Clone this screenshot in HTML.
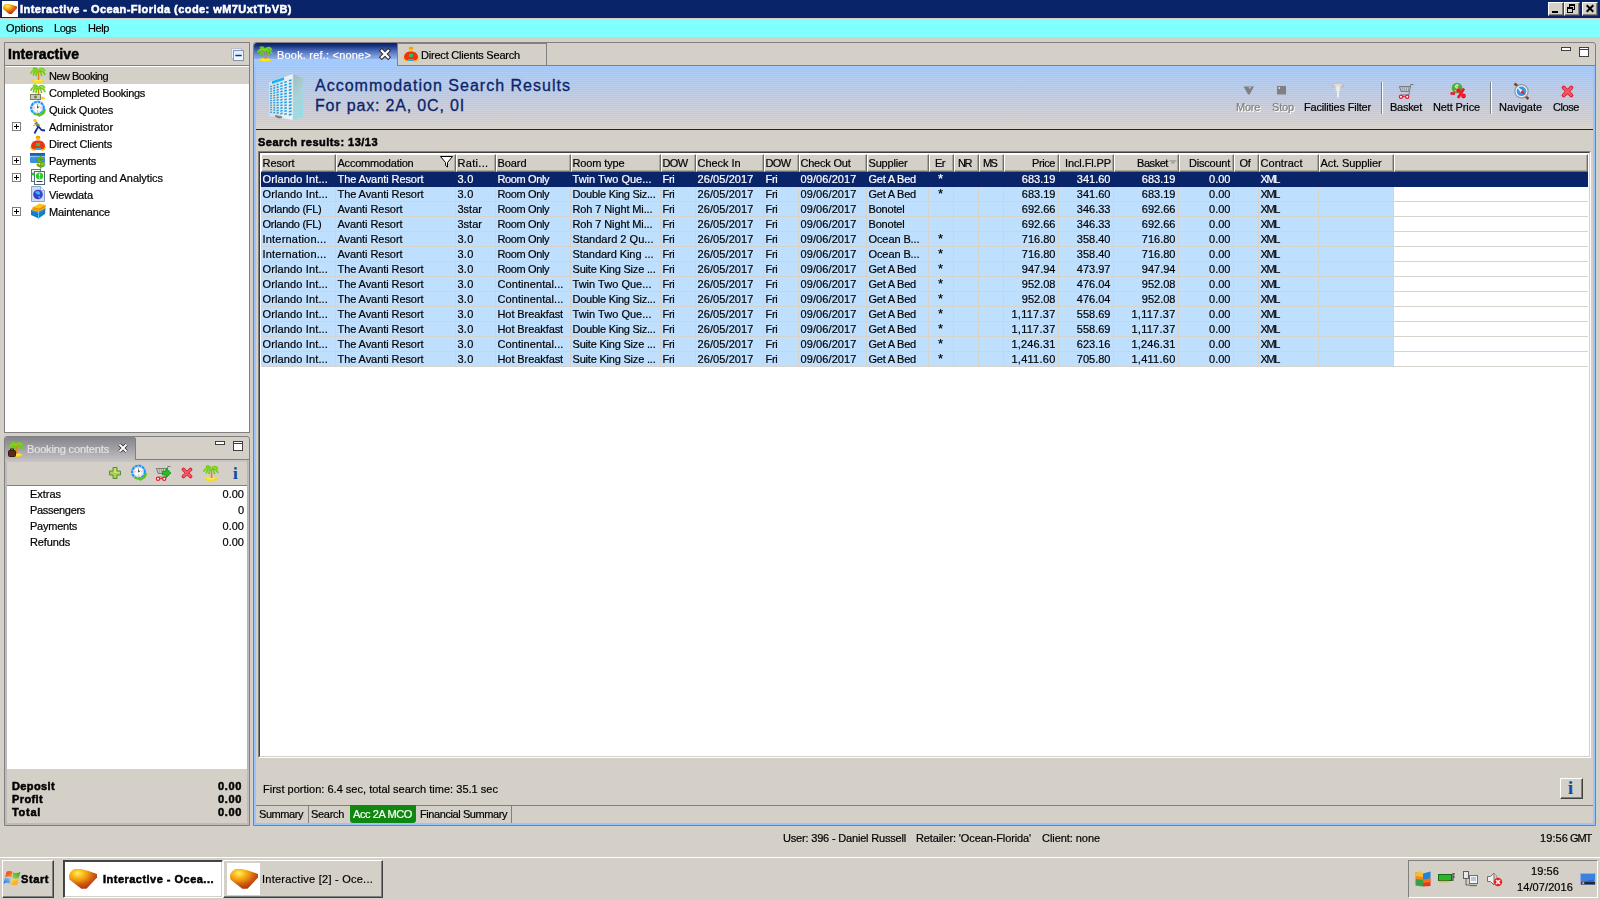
<!DOCTYPE html>
<html><head><meta charset="utf-8"><title>Interactive - Ocean-Florida</title>
<style>
html,body{margin:0;padding:0}
body{width:1600px;height:900px;overflow:hidden;background:#D4D0C8;position:relative;font-family:"Liberation Sans",sans-serif;font-size:11px;color:#000}
.b{position:absolute;box-sizing:border-box}
.t{position:absolute;white-space:nowrap;line-height:13px;height:13px;filter:grayscale(1);-webkit-text-stroke:0.2px}
.c{filter:none}
.bd{-webkit-text-stroke:0.5px}
svg{position:absolute;overflow:visible}
.hc{border:1px solid;border-color:#fff #716F64 #716F64 #fff;box-shadow:inset -1px -1px 0 #ACA899}
</style></head>
<body>
<div class="b" style="left:0px;top:0px;width:1600px;height:18px;background:#0A246A"></div>
<div class="b" style="left:2px;top:1px;width:16px;height:16px;background:#fff"></div>
<svg style="left:3px;top:4px" width="14" height="10" viewBox="0 0 28 20"><defs><radialGradient id="gg3_4" cx="0.32" cy="0.22" r="0.85"><stop offset="0" stop-color="#FFF27A"/><stop offset="0.18" stop-color="#FFC824"/><stop offset="0.42" stop-color="#F0960F"/><stop offset="0.66" stop-color="#CE5A16"/><stop offset="0.9" stop-color="#B43C0A"/></radialGradient></defs><path d="M0 7.500 C0 4 3 0.500 6 0 L12 0 L19.500 2 L28 5 L28 8.500 L17.500 19.800 L12.300 19.800 L3 12.500 L0.500 10.500 Z" fill="url(#gg3_4)"/></svg>
<div class="t bd" style="left:20px;top:3px;font-weight:bold;color:#fff;letter-spacing:0.438px">Interactive - Ocean-Florida (code: wM7UxtTbVB)</div>
<div class="b" style="left:1548px;top:2px;width:16px;height:14px;background:#D4D0C8;border:1px solid;border-color:#fff #404040 #404040 #fff;box-shadow:inset -1px -1px 0 #808080"></div>
<div class="b" style="left:1552px;top:11px;width:6px;height:2px;background:#000"></div>
<div class="b" style="left:1564px;top:2px;width:16px;height:14px;background:#D4D0C8;border:1px solid;border-color:#fff #404040 #404040 #fff;box-shadow:inset -1px -1px 0 #808080"></div>
<svg style="left:1566px;top:3px" width="12" height="11" viewBox="0 0 12 11"><g shape-rendering="crispEdges" fill="#000"><rect x="3" y="1" width="6" height="2"/><rect x="8" y="1" width="1" height="6"/><rect x="3" y="1" width="1" height="3"/><rect x="7" y="6" width="2" height="1"/><rect x="1" y="4" width="6" height="2"/><rect x="1" y="4" width="1" height="6"/><rect x="6" y="4" width="1" height="6"/><rect x="1" y="9" width="6" height="1"/></g></svg>
<div class="b" style="left:1582px;top:2px;width:16px;height:14px;background:#D4D0C8;border:1px solid;border-color:#fff #404040 #404040 #fff;box-shadow:inset -1px -1px 0 #808080"></div>
<svg style="left:1585px;top:4px" width="10" height="9" viewBox="0 0 10 9"><path d="M1.700 1.200 L8.300 7.800 M8.300 1.200 L1.700 7.800" stroke="#000" stroke-width="2"/></svg>
<div class="b" style="left:0px;top:19px;width:1600px;height:18px;background:#80FFFF"></div>
<div class="t" style="left:6px;top:22px;letter-spacing:-0.130px">Options</div>
<div class="t" style="left:54px;top:22px;letter-spacing:-0.464px">Logs</div>
<div class="t" style="left:88px;top:22px;letter-spacing:-0.406px">Help</div>
<div class="b" style="left:4px;top:42px;width:246px;height:391px;border:1px solid #808080"></div>
<div class="b" style="left:5px;top:65px;width:244px;height:1px;background:#808080"></div>
<div class="t bd" style="left:8px;top:45px;font-size:14px;font-weight:bold;line-height:18px;height:18px;letter-spacing:0.088px">Interactive</div>
<svg style="left:231px;top:48px" width="14" height="14" viewBox="0 0 14 14"><rect x="0.500" y="0.500" width="10" height="10" fill="#E8F2FC" stroke="#B4C0DA" stroke-width="1"/><rect x="2.500" y="2.500" width="10" height="10" fill="#F0F8FF" stroke="#8C94AC" stroke-width="1"/><rect x="3" y="3" width="9" height="3" fill="#DCF0FF"/><path d="M4.300 7.500 h6.400" stroke="#003A7C" stroke-width="1.500"/></svg>
<div class="b" style="left:5px;top:66px;width:244px;height:366px;background:#fff"></div>
<div class="b" style="left:5px;top:67px;width:244px;height:17px;background:#D4D0C8"></div>
<div class="t" style="left:49px;top:70px;letter-spacing:-0.529px">New Booking</div>
<svg style="left:30px;top:67px" width="16" height="16" viewBox="0 0 16 16"><ellipse cx="8" cy="14" rx="6.5" ry="1.8" fill="#FFD800"/><ellipse cx="8" cy="13.5" rx="4.5" ry="1" fill="#FFEA40"/><path d="M8.2 4.5 C9.2 7 8.2 10 8.6 13" stroke="#E0861A" stroke-width="1.6" fill="none"/><path d="M8 4 C5 1.5 2.5 3 1 6 M8 4 C6 3 3.5 5 3.5 8 M8 4 C7 1 4.5 0.5 3.5 1.5 M8 4 C10 0.5 13 1 14.5 3.5 M8 4 C11 2.5 14 5 14.8 7.5 M8 4 C10 4 11.5 6 11.5 8.5 M8 4 C7 5 5.8 6.5 6 8.5" stroke="#70CC14" stroke-width="1.7" fill="none" stroke-linecap="round"/><path d="M8 4 C5.5 2.5 3 3.5 2 5.5 M8 4 C10.5 1.5 12.5 2 14 4" stroke="#99DD33" stroke-width="0.9" fill="none"/></svg>
<div class="t" style="left:49px;top:87px;letter-spacing:-0.306px">Completed Bookings</div>
<svg style="left:30px;top:84px" width="16" height="16" viewBox="0 0 16 16"><ellipse cx="11" cy="14.2" rx="4" ry="1.4" fill="#FFD21A"/><path d="M8.2 4.5 C9.2 7 8.2 10 8.6 13" stroke="#E0861A" stroke-width="1.6" fill="none"/><path d="M8 4 C5 1.5 2.5 3 1 6 M8 4 C6 3 3.5 5 3.5 8 M8 4 C7 1 4.5 0.5 3.5 1.5 M8 4 C10 0.5 13 1 14.5 3.5 M8 4 C11 2.5 14 5 14.8 7.5 M8 4 C10 4 11.5 6 11.5 8.5 M8 4 C7 5 5.8 6.5 6 8.5" stroke="#70CC14" stroke-width="1.7" fill="none" stroke-linecap="round"/><path d="M8 4 C5.5 2.5 3 3.5 2 5.5 M8 4 C10.5 1.5 12.5 2 14 4" stroke="#99DD33" stroke-width="0.9" fill="none"/><rect x="0.5" y="10.5" width="10" height="5" fill="#C9CDB0" stroke="#7A8060" stroke-width="1"/><circle cx="5.5" cy="13" r="1.4" fill="#70785A"/></svg>
<div class="t" style="left:49px;top:104px;letter-spacing:-0.220px">Quick Quotes</div>
<svg style="left:30px;top:101px" width="16" height="16" viewBox="0 0 16 16"><circle cx="7.500" cy="7" r="6.300" fill="#fff" stroke="#1E90FF" stroke-width="2.200" stroke-dasharray="3 0.600"/><path d="M2 9.500 C3.500 13 7 13.500 9 13 C11.500 12.500 13 11 13.500 8.500 L16 8 L15.300 11.500 C13.500 14.500 11 14.500 9.500 16 L7.300 14.600 C4.500 14.500 2.200 12.500 2 9.500Z" fill="#5CC41E"/><circle cx="7.500" cy="6.800" r="4.700" fill="#FCFCFC" stroke="#C0C8D0" stroke-width="0.800"/><path d="M7.500 3 v1 M7.500 9.600 v1 M3.700 6.800 h1 M10.300 6.800 h1" stroke="#888" stroke-width="0.800"/><path d="M7.500 4.500 V7 L9.300 5.700" stroke="#444" stroke-width="0.900" fill="none"/></svg>
<div class="t" style="left:49px;top:121px;letter-spacing:-0.062px">Administrator</div>
<svg style="left:30px;top:118px" width="16" height="16" viewBox="0 0 16 16"><circle cx="5" cy="2.5" r="1.8" fill="#FFC733"/><path d="M5.5 4.5 L8.5 8.5" stroke="#5577AA" stroke-width="3"/><path d="M6.5 6 L3 8 M7 5.5 L10 7" stroke="#FFB020" stroke-width="1.3"/><path d="M8.5 8.5 L6 12.5 L4.5 15.5 M8.5 8.5 L11.5 12 L15 12.5" stroke="#1A2E9A" stroke-width="1.8" fill="none" stroke-linejoin="round"/><path d="M7 6 L9 8" stroke="#33AA33" stroke-width="1.5"/></svg>
<svg style="left:12px;top:122px" width="9" height="9" viewBox="0 0 9 9"><rect x="0.5" y="0.5" width="8" height="8" fill="#fff" stroke="#808080" stroke-width="1"/><path d="M2 4.500 H7 M4.500 2 V7" stroke="#000" stroke-width="1"/></svg>
<div class="t" style="left:49px;top:138px;letter-spacing:-0.172px">Direct Clients</div>
<svg style="left:30px;top:135px" width="16" height="16" viewBox="0 0 16 16"><circle cx="8" cy="2.8" r="2.4" fill="#FFC21A"/><path d="M6 2 h4" stroke="#E08000" stroke-width="1"/><path d="M1 13 C0.5 8 3 5.5 8 5.5 C13 5.5 15.5 8 15 13 C13 15.5 3 15.5 1 13Z" fill="#EE3311"/><path d="M1 12 C0.5 13.5 2.5 15.5 4.5 15 M15 12 C15.5 13.5 13.5 15.5 11.5 15" stroke="#FFC21A" stroke-width="1.6" fill="none"/><rect x="6" y="8" width="4" height="3" fill="#33BB55"/><rect x="5" y="13" width="6" height="2" fill="#33AACC"/></svg>
<div class="t" style="left:49px;top:155px;letter-spacing:-0.239px">Payments</div>
<svg style="left:30px;top:152px" width="16" height="16" viewBox="0 0 16 16"><rect x="0" y="1" width="15" height="10" rx="1" fill="#3B8FE0"/><rect x="0" y="1" width="15" height="2.5" fill="#1A5FB0"/><rect x="0" y="4" width="15" height="1.2" fill="#7FC0FF"/><text x="6.5" y="15" font-family="Liberation Sans" font-weight="bold" font-size="15" fill="#7BC618" stroke="#4C8A00" stroke-width="0.5">$</text></svg>
<svg style="left:12px;top:156px" width="9" height="9" viewBox="0 0 9 9"><rect x="0.5" y="0.5" width="8" height="8" fill="#fff" stroke="#808080" stroke-width="1"/><path d="M2 4.500 H7 M4.500 2 V7" stroke="#000" stroke-width="1"/></svg>
<div class="t" style="left:49px;top:172px;letter-spacing:-0.069px">Reporting and Analytics</div>
<svg style="left:30px;top:169px" width="16" height="16" viewBox="0 0 16 16"><rect x="1.5" y="0.5" width="9" height="12" fill="#F4F6F8" stroke="#607080" stroke-width="1"/><rect x="4.500" y="2.5" width="10" height="13" fill="#fff" stroke="#506878" stroke-width="1"/><circle cx="9.5" cy="7" r="3.6" fill="#22CC22"/><path d="M9.5 4.500 v3" stroke="#fff" stroke-width="1.3"/><circle cx="9.5" cy="9" r="0.8" fill="#fff"/><path d="M6.5 12.5 h6" stroke="#663322" stroke-width="1"/><circle cx="3.3" cy="5" r="1.5" fill="#33BB33"/></svg>
<svg style="left:12px;top:173px" width="9" height="9" viewBox="0 0 9 9"><rect x="0.5" y="0.5" width="8" height="8" fill="#fff" stroke="#808080" stroke-width="1"/><path d="M2 4.500 H7 M4.500 2 V7" stroke="#000" stroke-width="1"/></svg>
<div class="t" style="left:49px;top:189px;letter-spacing:-0.132px">Viewdata</div>
<svg style="left:30px;top:186px" width="16" height="16" viewBox="0 0 16 16"><path d="M1.5 0.5 H10.5 L14.5 4.500 V15.5 H1.5Z" fill="#CFDDF0" stroke="#8CA4C8" stroke-width="1"/><path d="M10.5 0.5 V4.500 H14.5" fill="#F4F8FC" stroke="#8CA4C8" stroke-width="0.8"/><circle cx="8" cy="8.5" r="4.800" fill="#3A3FD0"/><path d="M5.5 6 C7 4.500 9 5 10 6.5 C11 8 9.5 9 8 8.5 C6.5 8 5.5 7.5 5.5 6Z M8.5 10 C10 10 11 11 10 12 C9 12.500 8 11.500 8.500 10Z" fill="#33BBEE"/></svg>
<div class="t" style="left:49px;top:206px;letter-spacing:-0.181px">Maintenance</div>
<svg style="left:30px;top:203px" width="16" height="16" viewBox="0 0 16 16"><path d="M1 7 L9 3 L15.500 5 L15 11 L8.500 15.500 L1 12Z" fill="#1E8FE0"/><path d="M1 9 L8.500 12 L15.300 7.500 M1 11 L8.500 14 L15.100 9.500" stroke="#0A5FA8" stroke-width="0.8" fill="none"/><path d="M2.500 4.500 L9.500 0.500 L15.500 2 L15.500 5 L8.500 9 L1.500 7Z" fill="#FFC21A"/><path d="M2.500 6 L8.500 7.500 L15.500 3.500 M3 4.700 L9 6.200 L15.500 2.500" stroke="#E07800" stroke-width="0.8" fill="none"/><path d="M8.500 9 V15.500" stroke="#55C8F8" stroke-width="1"/></svg>
<svg style="left:12px;top:207px" width="9" height="9" viewBox="0 0 9 9"><rect x="0.5" y="0.5" width="8" height="8" fill="#fff" stroke="#808080" stroke-width="1"/><path d="M2 4.500 H7 M4.500 2 V7" stroke="#000" stroke-width="1"/></svg>
<div class="b" style="left:4px;top:436px;width:246px;height:390px;border:1px solid #808080;border-radius:3px 3px 0 0"></div>
<div class="b" style="left:5px;top:460px;width:244px;height:365px;border:2px solid #BEBABA;border-top:none"></div>
<div class="b" style="left:5px;top:437px;width:130px;height:25px;background:linear-gradient(#84848C 0%,#A4A2A8 50%,#C8C4C6 100%);border-radius:2px 0 0 0"></div>
<div class="b" style="left:135px;top:460px;width:114px;height:2px;background:#C8C4C6"></div>
<div class="b" style="left:135px;top:438px;width:1px;height:22px;background:#808080"></div>
<div class="b" style="left:135px;top:459px;width:114px;height:1px;background:#808080"></div>
<svg style="left:8px;top:441px" width="16" height="16" viewBox="0 0 16 16"><ellipse cx="8" cy="14" rx="6.5" ry="1.8" fill="#FFD800"/><ellipse cx="8" cy="13.5" rx="4.5" ry="1" fill="#FFEA40"/><path d="M8.2 4.5 C9.2 7 8.2 10 8.6 13" stroke="#E0861A" stroke-width="1.6" fill="none"/><path d="M8 4 C5 1.5 2.5 3 1 6 M8 4 C6 3 3.5 5 3.5 8 M8 4 C7 1 4.5 0.5 3.5 1.5 M8 4 C10 0.5 13 1 14.5 3.5 M8 4 C11 2.5 14 5 14.8 7.5 M8 4 C10 4 11.5 6 11.5 8.5 M8 4 C7 5 5.8 6.5 6 8.5" stroke="#70CC14" stroke-width="1.7" fill="none" stroke-linecap="round"/><path d="M8 4 C5.5 2.5 3 3.5 2 5.5 M8 4 C10.5 1.5 12.5 2 14 4" stroke="#99DD33" stroke-width="0.9" fill="none"/><rect x="0.5" y="9.5" width="7" height="6" rx="1" fill="#5A2E12" stroke="#3A1A08" stroke-width="1"/><rect x="2.5" y="8" width="3" height="1.5" fill="none" stroke="#3A1A08" stroke-width="1"/></svg>
<div class="t" style="left:27px;top:443px;color:#E4E2DA;letter-spacing:-0.150px">Booking contents</div>
<svg style="left:118px;top:443px" width="10" height="10" viewBox="0 0 10 10"><path d="M1.500 1.500 L8.500 8.500 M8.500 1.500 L1.500 8.500" stroke="#222" stroke-width="3.400"/><path d="M1.500 1.500 L8.500 8.500 M8.500 1.500 L1.500 8.500" stroke="#fff" stroke-width="2"/></svg>
<div class="b" style="left:215px;top:441px;width:10px;height:4px;background:#fff;border:1px solid #404040"></div>
<div class="b" style="left:233px;top:441px;width:10px;height:10px;background:#fff;border:1px solid #404040"></div>
<div class="b" style="left:233px;top:443px;width:10px;height:1px;background:#404040"></div>
<div class="b" style="left:7px;top:485px;width:241px;height:1px;background:#808080"></div>
<svg style="left:109px;top:467px" width="12" height="12" viewBox="0 0 12 12"><path d="M4 0.500 H8 V4 H11.500 V8 H8 V11.500 H4 V8 H0.500 V4 H4Z" fill="#B4CE48" stroke="#4C9240" stroke-width="1"/><path d="M5 1.500 H7 V5 H10.500 V6 H5Z" fill="#D0E070"/></svg>
<svg style="left:131px;top:465px" width="16" height="16" viewBox="0 0 16 16"><circle cx="7.500" cy="7" r="6.300" fill="#fff" stroke="#1E90FF" stroke-width="2.200" stroke-dasharray="3 0.600"/><path d="M2 9.500 C3.500 13 7 13.500 9 13 C11.500 12.500 13 11 13.500 8.500 L16 8 L15.300 11.500 C13.500 14.500 11 14.500 9.500 16 L7.300 14.600 C4.500 14.500 2.200 12.500 2 9.500Z" fill="#5CC41E"/><circle cx="7.500" cy="6.800" r="4.700" fill="#FCFCFC" stroke="#C0C8D0" stroke-width="0.800"/><path d="M7.500 3 v1 M7.500 9.600 v1 M3.700 6.800 h1 M10.300 6.800 h1" stroke="#888" stroke-width="0.800"/><path d="M7.500 4.500 V7 L9.300 5.700" stroke="#444" stroke-width="0.900" fill="none"/></svg>
<svg style="left:155px;top:465px" width="16" height="16" viewBox="0 0 16 16"><path d="M1 3.500 H12.500 M1.500 3.500 L3 8.500 H11.500 L12.800 1.500 H15.500" stroke="#7C7C7C" stroke-width="1" fill="none"/><path d="M4.200 3.500 V8.500 M6.300 3.500 V8.500 M8.400 3.500 V8.500 M10.500 3.500 V8.500" stroke="#8C8C8C" stroke-width="0.800"/><path d="M11.500 8.500 L10.800 12 H3.500" stroke="#7C7C7C" stroke-width="1" fill="none"/><circle cx="3" cy="13.700" r="1.600" fill="#fff" stroke="#E8182A" stroke-width="1.200"/><circle cx="9.200" cy="13.700" r="1.600" fill="#fff" stroke="#E8182A" stroke-width="1.200"/><path d="M4.800 13.700 H7.400" stroke="#E8182A" stroke-width="1"/><path d="M7.500 6 H11.500 V3.500 L16 8 L11.500 12.500 V10 H7.500Z" fill="#22C022" stroke="#0E8A0E" stroke-width="0.700"/></svg>
<svg style="left:181px;top:467px" width="12" height="12" viewBox="0 0 16 16"><path d="M3.300 3.300 L12.700 12.700 M12.700 3.300 L3.300 12.700" stroke="#D8283C" stroke-width="5" stroke-linecap="round"/><path d="M3.600 3.600 L12.400 12.400 M12.400 3.600 L3.600 12.400" stroke="#EE5A66" stroke-width="2.600" stroke-linecap="round"/></svg>
<svg style="left:203px;top:465px" width="16" height="16" viewBox="0 0 16 16"><ellipse cx="8" cy="14" rx="6.5" ry="1.8" fill="#FFD800"/><ellipse cx="8" cy="13.5" rx="4.5" ry="1" fill="#FFEA40"/><path d="M8.2 4.5 C9.2 7 8.2 10 8.6 13" stroke="#E0861A" stroke-width="1.6" fill="none"/><path d="M8 4 C5 1.5 2.5 3 1 6 M8 4 C6 3 3.5 5 3.5 8 M8 4 C7 1 4.5 0.5 3.5 1.5 M8 4 C10 0.5 13 1 14.5 3.5 M8 4 C11 2.5 14 5 14.8 7.5 M8 4 C10 4 11.5 6 11.5 8.5 M8 4 C7 5 5.8 6.5 6 8.5" stroke="#70CC14" stroke-width="1.7" fill="none" stroke-linecap="round"/><path d="M8 4 C5.5 2.5 3 3.5 2 5.5 M8 4 C10.5 1.5 12.5 2 14 4" stroke="#99DD33" stroke-width="0.9" fill="none"/></svg>
<div class="t c" style="left:233px;top:465px;font-family:'Liberation Serif',serif;font-weight:bold;font-size:17px;color:#0A4CA8;line-height:17px;height:17px">i</div>
<div class="b" style="left:7px;top:486px;width:240px;height:283px;background:#fff"></div>
<div class="b" style="left:247px;top:460px;width:1px;height:310px;background:#B8B4AC"></div>
<div class="t" style="left:30px;top:488px;letter-spacing:-0.029px">Extras</div>
<div class="t" style="right:1356px;top:488px">0.00</div>
<div class="t" style="left:30px;top:504px;letter-spacing:-0.309px">Passengers</div>
<div class="t" style="right:1356px;top:504px">0</div>
<div class="t" style="left:30px;top:520px;letter-spacing:-0.239px">Payments</div>
<div class="t" style="right:1356px;top:520px">0.00</div>
<div class="t" style="left:30px;top:536px;letter-spacing:-0.139px">Refunds</div>
<div class="t" style="right:1356px;top:536px">0.00</div>
<div class="t bd" style="left:12px;top:780px;font-weight:bold;letter-spacing:0.380px">Deposit</div>
<div class="t bd" style="right:1358px;top:780px;font-weight:bold;letter-spacing:0.647px">0.00</div>
<div class="t bd" style="left:12px;top:793px;font-weight:bold;letter-spacing:0.380px">Profit</div>
<div class="t bd" style="right:1358px;top:793px;font-weight:bold;letter-spacing:0.647px">0.00</div>
<div class="t bd" style="left:12px;top:806px;font-weight:bold;letter-spacing:0.708px">Total</div>
<div class="t bd" style="right:1358px;top:806px;font-weight:bold;letter-spacing:0.647px">0.00</div>
<div class="b" style="left:253px;top:42px;width:1343px;height:784px;border:1px solid #808080;border-radius:3px 3px 0 0"></div>
<div class="b" style="left:254px;top:66px;width:1341px;height:759px;border:2px solid #99C4FF;border-top:none"></div>
<div class="b" style="left:254px;top:65px;width:1341px;height:1px;background:#808080"></div>
<div class="b" style="left:256px;top:66px;width:1337px;height:63px;background:repeating-linear-gradient(rgba(255,255,255,0.07) 0 1px,rgba(0,0,0,0.02) 1px 2px),linear-gradient(#A2CAFC 0%,#ACCAF4 14%,#B8CBE8 36%,#C6CCDC 60%,#D0CED2 82%,#D8D4CE 100%)"></div>
<div class="b" style="left:256px;top:129px;width:1337px;height:1px;background:#0A246A"></div>
<div class="b" style="left:254px;top:43px;width:143px;height:23px;background:linear-gradient(#0A246A 0px,#0E2A72 2px,#2C4C9C 5px,#5676BE 9px,#7A9ADA 13px,#90B0E8 16px,#A2CAFC 16px);border-radius:3px 0 0 0"></div>
<svg style="left:257px;top:46px" width="16" height="16" viewBox="0 0 16 16"><ellipse cx="8" cy="14" rx="6.5" ry="1.8" fill="#FFD800"/><ellipse cx="8" cy="13.5" rx="4.5" ry="1" fill="#FFEA40"/><path d="M8.2 4.5 C9.2 7 8.2 10 8.6 13" stroke="#E0861A" stroke-width="1.6" fill="none"/><path d="M8 4 C5 1.5 2.5 3 1 6 M8 4 C6 3 3.5 5 3.5 8 M8 4 C7 1 4.5 0.5 3.5 1.5 M8 4 C10 0.5 13 1 14.5 3.5 M8 4 C11 2.5 14 5 14.8 7.5 M8 4 C10 4 11.5 6 11.5 8.5 M8 4 C7 5 5.8 6.5 6 8.5" stroke="#70CC14" stroke-width="1.7" fill="none" stroke-linecap="round"/><path d="M8 4 C5.5 2.5 3 3.5 2 5.5 M8 4 C10.5 1.5 12.5 2 14 4" stroke="#99DD33" stroke-width="0.9" fill="none"/></svg>
<div class="t" style="left:277px;top:49px;color:#fff;letter-spacing:0.194px">Book. ref.: &lt;none&gt;</div>
<svg style="left:380px;top:49px" width="10" height="10" viewBox="0 0 10 10"><path d="M1.800 1.800 L8.200 8.200 M8.200 1.800 L1.800 8.200" stroke="#303030" stroke-width="4.200" stroke-linecap="square"/><path d="M1.800 1.800 L8.200 8.200 M8.200 1.800 L1.800 8.200" stroke="#fff" stroke-width="2.200" stroke-linecap="square"/></svg>
<div class="b" style="left:397px;top:43px;width:150px;height:1px;background:#808080"></div>
<div class="b" style="left:546px;top:43px;width:1px;height:22px;background:#808080"></div>
<div class="b" style="left:397px;top:43px;width:1px;height:22px;background:#808080"></div>
<svg style="left:403px;top:46px" width="16" height="16" viewBox="0 0 16 16"><circle cx="8" cy="2.8" r="2.4" fill="#FFC21A"/><path d="M6 2 h4" stroke="#E08000" stroke-width="1"/><path d="M1 13 C0.5 8 3 5.5 8 5.5 C13 5.5 15.5 8 15 13 C13 15.5 3 15.5 1 13Z" fill="#EE3311"/><path d="M1 12 C0.5 13.5 2.5 15.5 4.5 15 M15 12 C15.5 13.5 13.5 15.5 11.5 15" stroke="#FFC21A" stroke-width="1.6" fill="none"/><rect x="6" y="8" width="4" height="3" fill="#33BB55"/><rect x="5" y="13" width="6" height="2" fill="#33AACC"/></svg>
<div class="t" style="left:421px;top:49px;letter-spacing:-0.206px">Direct Clients Search</div>
<div class="b" style="left:1561px;top:47px;width:10px;height:4px;background:#fff;border:1px solid #404040"></div>
<div class="b" style="left:1579px;top:47px;width:10px;height:10px;background:#fff;border:1px solid #404040"></div>
<div class="b" style="left:1579px;top:49px;width:10px;height:1px;background:#404040"></div>
<svg style="left:265px;top:73px" width="40" height="48" viewBox="0 0 40 48"><defs><linearGradient id="bl" x1="0" x2="1"><stop offset="0" stop-color="#D4DEE2"/><stop offset="1" stop-color="#F0F4F6"/></linearGradient><linearGradient id="br" x1="0" y1="0" x2="0.300" y2="1"><stop offset="0" stop-color="#A4B8BC"/><stop offset="0.600" stop-color="#A8D4DA"/><stop offset="1" stop-color="#9ADCE6"/></linearGradient></defs><path d="M4 9 L28 1 L28 47 L4 43Z" fill="url(#bl)"/><path d="M28 1 L38 5 L38 44 L28 47Z" fill="url(#br)"/><path d="M28 1 V47" stroke="#C4D4D8" stroke-width="0.800"/><path d="M7 8.300 L19 4.300 V6.900 L7 10.900Z" fill="#18B4F4"/><path d="M5.2 13.1 l1.7 -0.3 v1.3 l-1.7 0.3z" fill="#1C9CEA"/><path d="M5.2 15.4 l1.7 -0.3 v1.3 l-1.7 0.3z" fill="#1C9CEA"/><path d="M5.2 17.8 l1.7 -0.3 v1.3 l-1.7 0.3z" fill="#1C9CEA"/><path d="M5.2 20.1 l1.7 -0.3 v1.3 l-1.7 0.3z" fill="#1C9CEA"/><path d="M5.2 22.4 l1.7 -0.3 v1.3 l-1.7 0.3z" fill="#1C9CEA"/><path d="M5.2 24.7 l1.7 -0.3 v1.3 l-1.7 0.3z" fill="#1C9CEA"/><path d="M5.2 27.1 l1.7 -0.3 v1.3 l-1.7 0.3z" fill="#1C9CEA"/><path d="M5.2 29.4 l1.7 -0.3 v1.3 l-1.7 0.3z" fill="#1C9CEA"/><path d="M5.2 31.7 l1.7 -0.3 v1.3 l-1.7 0.3z" fill="#1C9CEA"/><path d="M5.2 34.0 l1.7 -0.3 v1.3 l-1.7 0.3z" fill="#1C9CEA"/><path d="M5.2 36.3 l1.7 -0.3 v1.3 l-1.7 0.3z" fill="#1C9CEA"/><path d="M5.2 38.7 l1.7 -0.3 v1.3 l-1.7 0.3z" fill="#1C9CEA"/><path d="M8.3 12.1 l1.9 -0.4 v1.4 l-1.9 0.4z" fill="#1C9CEA"/><path d="M8.3 14.5 l1.9 -0.4 v1.4 l-1.9 0.4z" fill="#1C9CEA"/><path d="M8.3 17.0 l1.9 -0.4 v1.4 l-1.9 0.4z" fill="#1C9CEA"/><path d="M8.3 19.4 l1.9 -0.4 v1.4 l-1.9 0.4z" fill="#1C9CEA"/><path d="M8.3 21.9 l1.9 -0.4 v1.4 l-1.9 0.4z" fill="#1C9CEA"/><path d="M8.3 24.3 l1.9 -0.4 v1.4 l-1.9 0.4z" fill="#1C9CEA"/><path d="M8.3 26.8 l1.9 -0.4 v1.4 l-1.9 0.4z" fill="#1C9CEA"/><path d="M8.3 29.2 l1.9 -0.4 v1.4 l-1.9 0.4z" fill="#1C9CEA"/><path d="M8.3 31.7 l1.9 -0.4 v1.4 l-1.9 0.4z" fill="#1C9CEA"/><path d="M8.3 34.2 l1.9 -0.4 v1.4 l-1.9 0.4z" fill="#1C9CEA"/><path d="M8.3 36.6 l1.9 -0.4 v1.4 l-1.9 0.4z" fill="#1C9CEA"/><path d="M8.3 39.1 l1.9 -0.4 v1.4 l-1.9 0.4z" fill="#1C9CEA"/><path d="M11.6 11.0 l2.1 -0.4 v1.5 l-2.1 0.4z" fill="#1C9CEA"/><path d="M11.6 13.6 l2.1 -0.4 v1.5 l-2.1 0.4z" fill="#1C9CEA"/><path d="M11.6 16.2 l2.1 -0.4 v1.5 l-2.1 0.4z" fill="#1C9CEA"/><path d="M11.6 18.7 l2.1 -0.4 v1.5 l-2.1 0.4z" fill="#1C9CEA"/><path d="M11.6 21.3 l2.1 -0.4 v1.5 l-2.1 0.4z" fill="#1C9CEA"/><path d="M11.6 23.9 l2.1 -0.4 v1.5 l-2.1 0.4z" fill="#1C9CEA"/><path d="M11.6 26.5 l2.1 -0.4 v1.5 l-2.1 0.4z" fill="#1C9CEA"/><path d="M11.6 29.1 l2.1 -0.4 v1.5 l-2.1 0.4z" fill="#1C9CEA"/><path d="M11.6 31.7 l2.1 -0.4 v1.5 l-2.1 0.4z" fill="#1C9CEA"/><path d="M11.6 34.3 l2.1 -0.4 v1.5 l-2.1 0.4z" fill="#1C9CEA"/><path d="M11.6 36.9 l2.1 -0.4 v1.5 l-2.1 0.4z" fill="#1C9CEA"/><path d="M11.6 39.5 l2.1 -0.4 v1.5 l-2.1 0.4z" fill="#1C9CEA"/><path d="M15.3 9.7 l2.3 -0.5 v1.5 l-2.3 0.5z" fill="#1C9CEA"/><path d="M15.3 12.5 l2.3 -0.5 v1.5 l-2.3 0.5z" fill="#1C9CEA"/><path d="M15.3 15.2 l2.3 -0.5 v1.5 l-2.3 0.5z" fill="#1C9CEA"/><path d="M15.3 18.0 l2.3 -0.5 v1.5 l-2.3 0.5z" fill="#1C9CEA"/><path d="M15.3 20.7 l2.3 -0.5 v1.5 l-2.3 0.5z" fill="#1C9CEA"/><path d="M15.3 23.5 l2.3 -0.5 v1.5 l-2.3 0.5z" fill="#1C9CEA"/><path d="M15.3 26.2 l2.3 -0.5 v1.5 l-2.3 0.5z" fill="#1C9CEA"/><path d="M15.3 29.0 l2.3 -0.5 v1.5 l-2.3 0.5z" fill="#1C9CEA"/><path d="M15.3 31.7 l2.3 -0.5 v1.5 l-2.3 0.5z" fill="#1C9CEA"/><path d="M15.3 34.4 l2.3 -0.5 v1.5 l-2.3 0.5z" fill="#1C9CEA"/><path d="M15.3 37.2 l2.3 -0.5 v1.5 l-2.3 0.5z" fill="#1C9CEA"/><path d="M15.3 39.9 l2.3 -0.5 v1.5 l-2.3 0.5z" fill="#1C9CEA"/><path d="M19.3 8.4 l2.5 -0.5 v1.6 l-2.5 0.5z" fill="#1C9CEA"/><path d="M19.3 11.3 l2.5 -0.5 v1.6 l-2.5 0.5z" fill="#1C9CEA"/><path d="M19.3 14.2 l2.5 -0.5 v1.6 l-2.5 0.5z" fill="#1C9CEA"/><path d="M19.3 17.1 l2.5 -0.5 v1.6 l-2.5 0.5z" fill="#1C9CEA"/><path d="M19.3 20.1 l2.5 -0.5 v1.6 l-2.5 0.5z" fill="#1C9CEA"/><path d="M19.3 23.0 l2.5 -0.5 v1.6 l-2.5 0.5z" fill="#1C9CEA"/><path d="M19.3 25.9 l2.5 -0.5 v1.6 l-2.5 0.5z" fill="#1C9CEA"/><path d="M19.3 28.8 l2.5 -0.5 v1.6 l-2.5 0.5z" fill="#1C9CEA"/><path d="M19.3 31.7 l2.5 -0.5 v1.6 l-2.5 0.5z" fill="#1C9CEA"/><path d="M19.3 34.6 l2.5 -0.5 v1.6 l-2.5 0.5z" fill="#1C9CEA"/><path d="M19.3 37.5 l2.5 -0.5 v1.6 l-2.5 0.5z" fill="#1C9CEA"/><path d="M19.3 40.4 l2.5 -0.5 v1.6 l-2.5 0.5z" fill="#1C9CEA"/><path d="M23.8 6.9 l2.8 -0.6 v1.7 l-2.8 0.6z" fill="#1C9CEA"/><path d="M23.8 10.0 l2.8 -0.6 v1.7 l-2.8 0.6z" fill="#1C9CEA"/><path d="M23.8 13.1 l2.8 -0.6 v1.7 l-2.8 0.6z" fill="#1C9CEA"/><path d="M23.8 16.2 l2.8 -0.6 v1.7 l-2.8 0.6z" fill="#1C9CEA"/><path d="M23.8 19.3 l2.8 -0.6 v1.7 l-2.8 0.6z" fill="#1C9CEA"/><path d="M23.8 22.4 l2.8 -0.6 v1.7 l-2.8 0.6z" fill="#1C9CEA"/><path d="M23.8 25.5 l2.8 -0.6 v1.7 l-2.8 0.6z" fill="#1C9CEA"/><path d="M23.8 28.6 l2.8 -0.6 v1.7 l-2.8 0.6z" fill="#1C9CEA"/><path d="M23.8 31.7 l2.8 -0.6 v1.7 l-2.8 0.6z" fill="#1C9CEA"/><path d="M23.8 34.8 l2.8 -0.6 v1.7 l-2.8 0.6z" fill="#1C9CEA"/><path d="M23.8 37.9 l2.8 -0.6 v1.7 l-2.8 0.6z" fill="#1C9CEA"/><path d="M23.8 41.0 l2.8 -0.6 v1.7 l-2.8 0.6z" fill="#1C9CEA"/><path d="M10 42 L17 43.300 V45 L13.500 45.600 L10 43.800Z" fill="#7C868A"/></svg>
<div class="t c" style="left:315px;top:75px;font-size:16px;color:#0A246A;line-height:21px;height:21px;letter-spacing:1.012px;-webkit-text-stroke:0.3px">Accommodation Search Results</div>
<div class="t c" style="left:315px;top:95px;font-size:16px;color:#0A246A;line-height:21px;height:21px;letter-spacing:0.827px;-webkit-text-stroke:0.3px">For pax: 2A, 0C, 0I</div>
<div class="t" style="left:1237px;top:102px;color:#fff;letter-spacing:-0.266px">More</div>
<div class="t" style="left:1236px;top:101px;color:#808080;letter-spacing:-0.266px">More</div>
<div class="t" style="left:1273px;top:102px;color:#fff;letter-spacing:-0.157px">Stop</div>
<div class="t" style="left:1272px;top:101px;color:#808080;letter-spacing:-0.157px">Stop</div>
<svg style="left:1243px;top:86px" width="12" height="10" viewBox="0 0 12 10"><path d="M0.500 0.500 H11 L6.500 8.500 H5Z" fill="#808080"/><rect x="6" y="1" width="1.500" height="1.500" fill="#D8D8D8"/></svg>
<svg style="left:1277px;top:86px" width="9" height="9" viewBox="0 0 9 9"><rect x="0" y="0" width="9" height="8.500" fill="#808080"/><rect x="1.500" y="1" width="1.500" height="2" fill="#D8D8D8"/></svg>
<div class="t" style="left:1304px;top:101px;letter-spacing:-0.194px">Facilities Filter</div>
<svg style="left:1331px;top:82px" width="14" height="17" viewBox="0 0 14 17"><defs><linearGradient id="fn" x1="0" x2="1"><stop offset="0" stop-color="#A8A8A8"/><stop offset="0.500" stop-color="#F4F4F4"/><stop offset="1" stop-color="#A0A0A0"/></linearGradient></defs><ellipse cx="7" cy="3" rx="6" ry="2" fill="#D8D8D8" stroke="#B0B0B0" stroke-width="0.600"/><path d="M1 3.500 L6 10 V16 L8 15 V10 L13 3.500Z" fill="url(#fn)"/></svg>
<div class="b" style="left:1381px;top:82px;width:1px;height:32px;background:#808080"></div>
<div class="b" style="left:1382px;top:82px;width:1px;height:32px;background:#fff"></div>
<svg style="left:1398px;top:83px" width="16" height="16" viewBox="0 0 16 16"><path d="M1 3.500 H12.500 M1.500 3.500 L3 8.500 H11.500 L12.800 1.500 H15.500" stroke="#7C7C7C" stroke-width="1" fill="none"/><path d="M4.200 3.500 V8.500 M6.300 3.500 V8.500 M8.400 3.500 V8.500 M10.500 3.500 V8.500" stroke="#8C8C8C" stroke-width="0.800"/><path d="M11.500 8.500 L10.800 12 H3.500" stroke="#7C7C7C" stroke-width="1" fill="none"/><circle cx="3" cy="13.700" r="1.600" fill="#fff" stroke="#E8182A" stroke-width="1.200"/><circle cx="9.200" cy="13.700" r="1.600" fill="#fff" stroke="#E8182A" stroke-width="1.200"/><path d="M4.800 13.700 H7.400" stroke="#E8182A" stroke-width="1"/></svg>
<div class="t" style="left:1390px;top:101px;letter-spacing:-0.272px">Basket</div>
<svg style="left:1449px;top:82px" width="18" height="18" viewBox="0 0 18 18"><circle cx="8" cy="6" r="5.300" fill="#4FAE3A"/><path d="M9.800 3.600 C8.500 2.600 6.300 3 6.300 4.600 C6.300 6.400 9.800 5.800 9.800 7.600 C9.800 9.200 7.300 9.400 6 8.300 M8 2 V10" stroke="#CBEFB4" stroke-width="1.100" fill="none"/><path d="M1.500 11.500 h4.500" stroke="#E8182A" stroke-width="2.600"/><circle cx="9.500" cy="8.500" r="2.300" fill="#E8182A"/><circle cx="14.500" cy="14" r="2.400" fill="#E8182A"/><path d="M15 6.500 L9 16" stroke="#E8182A" stroke-width="2.600"/></svg>
<div class="t" style="left:1433px;top:101px;letter-spacing:-0.129px">Nett Price</div>
<div class="b" style="left:1490px;top:82px;width:1px;height:32px;background:#808080"></div>
<div class="b" style="left:1491px;top:82px;width:1px;height:32px;background:#fff"></div>
<svg style="left:1512px;top:82px" width="18" height="18" viewBox="0 0 18 18"><path d="M2.500 1.500 L6 4.500 M16.500 17 L13 14" stroke="#7A4A1A" stroke-width="2.600"/><circle cx="9.500" cy="9.300" r="6.600" fill="#F4F8FC" stroke="#8C9CAC" stroke-width="1.300"/><circle cx="9.500" cy="9.300" r="4.800" fill="#3A94E4"/><path d="M5.500 5.300 L10.700 8.300 L8.500 10.500Z" fill="#fff"/><path d="M13.500 13.300 L8.300 10.300 L10.500 8.100Z" fill="#E82828"/></svg>
<div class="t" style="left:1499px;top:101px;letter-spacing:-0.052px">Navigate</div>
<svg style="left:1561px;top:85px" width="13" height="13" viewBox="0 0 16 16"><path d="M3.300 3.300 L12.700 12.700 M12.700 3.300 L3.300 12.700" stroke="#D8283C" stroke-width="5" stroke-linecap="round"/><path d="M3.600 3.600 L12.400 12.400 M12.400 3.600 L3.600 12.400" stroke="#EE5A66" stroke-width="2.600" stroke-linecap="round"/></svg>
<div class="t" style="left:1553px;top:101px;letter-spacing:-0.425px">Close</div>
<div class="t bd" style="left:258px;top:136px;font-weight:bold;letter-spacing:0.473px">Search results: 13/13</div>
<div class="b" style="left:258px;top:151px;width:1333px;height:607px;background:#fff;border:1px solid #808080;border-right-color:#fff;border-bottom-color:#fff"></div>
<div class="b" style="left:259px;top:152px;width:1331px;height:605px;border:1px solid #404040;border-right-color:#D4D0C8;border-bottom-color:#D4D0C8"></div>
<div class="b" style="left:261px;top:154px;width:1327px;height:18px;background:#D4D0C8"></div>
<div class="b hc" style="left:261px;top:154px;width:75px;height:18px"></div>
<div class="t" style="left:262.5px;top:157px;letter-spacing:-0.067px">Resort</div>
<div class="b hc" style="left:336px;top:154px;width:120px;height:18px"></div>
<div class="t" style="left:337.5px;top:157px;letter-spacing:-0.221px">Accommodation</div>
<div class="b hc" style="left:456px;top:154px;width:40px;height:18px"></div>
<div class="t" style="left:457.5px;top:157px;letter-spacing:0.324px">Rati...</div>
<div class="b hc" style="left:496px;top:154px;width:75px;height:18px"></div>
<div class="t" style="left:497.5px;top:157px;letter-spacing:-0.071px">Board</div>
<div class="b hc" style="left:571px;top:154px;width:90px;height:18px"></div>
<div class="t" style="left:572.5px;top:157px;letter-spacing:-0.133px">Room type</div>
<div class="b hc" style="left:661px;top:154px;width:35px;height:18px"></div>
<div class="t" style="left:662.5px;top:157px;letter-spacing:-0.628px">DOW</div>
<div class="b hc" style="left:696px;top:154px;width:68px;height:18px"></div>
<div class="t" style="left:697.5px;top:157px;letter-spacing:-0.052px">Check In</div>
<div class="b hc" style="left:764px;top:154px;width:35px;height:18px"></div>
<div class="t" style="left:765.5px;top:157px;letter-spacing:-0.628px">DOW</div>
<div class="b hc" style="left:799px;top:154px;width:68px;height:18px"></div>
<div class="t" style="left:800.5px;top:157px;letter-spacing:-0.219px">Check Out</div>
<div class="b hc" style="left:867px;top:154px;width:62px;height:18px"></div>
<div class="t" style="left:868.5px;top:157px;letter-spacing:-0.170px">Supplier</div>
<div class="b hc" style="left:929px;top:154px;width:25px;height:18px"></div>
<div class="t" style="left:935px;top:157px;letter-spacing:-0.500px">Er</div>
<div class="b hc" style="left:954px;top:154px;width:25px;height:18px"></div>
<div class="t" style="left:958px;top:157px;letter-spacing:-1.444px">NR</div>
<div class="b hc" style="left:979px;top:154px;width:25px;height:18px"></div>
<div class="t" style="left:983px;top:157px;letter-spacing:-1.750px">MS</div>
<div class="b hc" style="left:1004px;top:154px;width:55px;height:18px"></div>
<div class="t" style="right:545px;top:157px;letter-spacing:-0.412px">Price</div>
<div class="b hc" style="left:1059px;top:154px;width:55px;height:18px"></div>
<div class="t" style="right:489px;top:157px;letter-spacing:-0.107px">Incl.Fl.PP</div>
<div class="b hc" style="left:1114px;top:154px;width:65px;height:18px"></div>
<div class="t" style="right:432px;top:157px;letter-spacing:-0.438px">Basket</div>
<div class="b hc" style="left:1179px;top:154px;width:55px;height:18px"></div>
<div class="t" style="right:370px;top:157px;letter-spacing:-0.225px">Discount</div>
<div class="b hc" style="left:1234px;top:154px;width:25px;height:18px"></div>
<div class="t" style="left:1239.5px;top:157px;letter-spacing:-0.307px">Of</div>
<div class="b hc" style="left:1259px;top:154px;width:60px;height:18px"></div>
<div class="t" style="left:1260.5px;top:157px;letter-spacing:0.053px">Contract</div>
<div class="b hc" style="left:1319px;top:154px;width:75px;height:18px"></div>
<div class="t" style="left:1320.5px;top:157px;letter-spacing:-0.105px">Act. Supplier</div>
<div class="b hc" style="left:1394px;top:154px;width:194px;height:18px"></div>
<svg style="left:440px;top:156px" width="13" height="12" viewBox="0 0 13 12"><path d="M0.500 0.500 H12.500 L7.500 6.500 V11 L5.500 9.500 V6.500Z" fill="#fff" stroke="#000" stroke-width="1"/></svg>
<svg style="left:1169px;top:160px" width="8" height="5" viewBox="0 0 8 5"><path d="M0 0 H8 L4 4.500Z" fill="#A8A8A8"/></svg>
<div class="b" style="left:261px;top:187px;width:1133px;height:180px;background:#BFDFFF"></div>
<div class="b" style="left:261px;top:172px;width:1327px;height:15px;background:#0A246A"></div>
<div class="b" style="left:261px;top:201px;width:1327px;height:1px;background:#D6D2CC"></div>
<div class="b" style="left:261px;top:216px;width:1327px;height:1px;background:#D6D2CC"></div>
<div class="b" style="left:261px;top:231px;width:1327px;height:1px;background:#D6D2CC"></div>
<div class="b" style="left:261px;top:246px;width:1327px;height:1px;background:#D6D2CC"></div>
<div class="b" style="left:261px;top:261px;width:1327px;height:1px;background:#D6D2CC"></div>
<div class="b" style="left:261px;top:276px;width:1327px;height:1px;background:#D6D2CC"></div>
<div class="b" style="left:261px;top:291px;width:1327px;height:1px;background:#D6D2CC"></div>
<div class="b" style="left:261px;top:306px;width:1327px;height:1px;background:#D6D2CC"></div>
<div class="b" style="left:261px;top:321px;width:1327px;height:1px;background:#D6D2CC"></div>
<div class="b" style="left:261px;top:336px;width:1327px;height:1px;background:#D6D2CC"></div>
<div class="b" style="left:261px;top:351px;width:1327px;height:1px;background:#D6D2CC"></div>
<div class="b" style="left:261px;top:366px;width:1327px;height:1px;background:#D6D2CC"></div>
<div class="b" style="left:335px;top:187px;width:1px;height:180px;background:#D6D2CC"></div>
<div class="b" style="left:455px;top:187px;width:1px;height:180px;background:#D6D2CC"></div>
<div class="b" style="left:495px;top:187px;width:1px;height:180px;background:#D6D2CC"></div>
<div class="b" style="left:570px;top:187px;width:1px;height:180px;background:#D6D2CC"></div>
<div class="b" style="left:660px;top:187px;width:1px;height:180px;background:#D6D2CC"></div>
<div class="b" style="left:695px;top:187px;width:1px;height:180px;background:#D6D2CC"></div>
<div class="b" style="left:763px;top:187px;width:1px;height:180px;background:#D6D2CC"></div>
<div class="b" style="left:798px;top:187px;width:1px;height:180px;background:#D6D2CC"></div>
<div class="b" style="left:866px;top:187px;width:1px;height:180px;background:#D6D2CC"></div>
<div class="b" style="left:928px;top:187px;width:1px;height:180px;background:#D6D2CC"></div>
<div class="b" style="left:953px;top:187px;width:1px;height:180px;background:#D6D2CC"></div>
<div class="b" style="left:978px;top:187px;width:1px;height:180px;background:#D6D2CC"></div>
<div class="b" style="left:1003px;top:187px;width:1px;height:180px;background:#D6D2CC"></div>
<div class="b" style="left:1058px;top:187px;width:1px;height:180px;background:#D6D2CC"></div>
<div class="b" style="left:1113px;top:187px;width:1px;height:180px;background:#D6D2CC"></div>
<div class="b" style="left:1178px;top:187px;width:1px;height:180px;background:#D6D2CC"></div>
<div class="b" style="left:1233px;top:187px;width:1px;height:180px;background:#D6D2CC"></div>
<div class="b" style="left:1258px;top:187px;width:1px;height:180px;background:#D6D2CC"></div>
<div class="b" style="left:1318px;top:187px;width:1px;height:180px;background:#D6D2CC"></div>
<div class="b" style="left:1393px;top:187px;width:1px;height:180px;background:#D6D2CC"></div>
<div class="t" style="left:262.5px;top:173px;color:#fff;letter-spacing:0.136px">Orlando Int...</div>
<div class="t" style="left:337.5px;top:173px;color:#fff;letter-spacing:-0.073px">The Avanti Resort</div>
<div class="t" style="left:457.5px;top:173px;color:#fff;letter-spacing:0.236px">3.0</div>
<div class="t" style="left:497.5px;top:173px;color:#fff;letter-spacing:-0.380px">Room Only</div>
<div class="t" style="left:572.5px;top:173px;color:#fff;letter-spacing:0.022px">Twin Two Que...</div>
<div class="t" style="left:662.5px;top:173px;color:#fff;letter-spacing:-0.276px">Fri</div>
<div class="t" style="left:697.5px;top:173px;color:#fff;letter-spacing:0.094px">26/05/2017</div>
<div class="t" style="left:765.5px;top:173px;color:#fff;letter-spacing:-0.276px">Fri</div>
<div class="t" style="left:800.5px;top:173px;color:#fff;letter-spacing:0.094px">09/06/2017</div>
<div class="t" style="left:868.5px;top:173px;color:#fff;letter-spacing:-0.227px">Get A Bed</div>
<div class="t" style="left:938px;top:172px;font-size:13px;color:#fff">*</div>
<div class="t" style="right:544.5px;top:173px;color:#fff">683.19</div>
<div class="t" style="right:489.5px;top:173px;color:#fff">341.60</div>
<div class="t" style="right:424.5px;top:173px;color:#fff">683.19</div>
<div class="t" style="right:369.5px;top:173px;color:#fff">0.00</div>
<div class="t" style="left:1260.5px;top:173px;color:#fff;letter-spacing:-1.373px">XML</div>
<div class="t" style="left:262.5px;top:188px;letter-spacing:0.136px">Orlando Int...</div>
<div class="t" style="left:337.5px;top:188px;letter-spacing:-0.073px">The Avanti Resort</div>
<div class="t" style="left:457.5px;top:188px;letter-spacing:0.236px">3.0</div>
<div class="t" style="left:497.5px;top:188px;letter-spacing:-0.380px">Room Only</div>
<div class="t" style="left:572.5px;top:188px;letter-spacing:-0.247px">Double King Siz...</div>
<div class="t" style="left:662.5px;top:188px;letter-spacing:-0.276px">Fri</div>
<div class="t" style="left:697.5px;top:188px;letter-spacing:0.094px">26/05/2017</div>
<div class="t" style="left:765.5px;top:188px;letter-spacing:-0.276px">Fri</div>
<div class="t" style="left:800.5px;top:188px;letter-spacing:0.094px">09/06/2017</div>
<div class="t" style="left:868.5px;top:188px;letter-spacing:-0.227px">Get A Bed</div>
<div class="t" style="left:938px;top:187px;font-size:13px">*</div>
<div class="t" style="right:544.5px;top:188px">683.19</div>
<div class="t" style="right:489.5px;top:188px">341.60</div>
<div class="t" style="right:424.5px;top:188px">683.19</div>
<div class="t" style="right:369.5px;top:188px">0.00</div>
<div class="t" style="left:1260.5px;top:188px;letter-spacing:-1.373px">XML</div>
<div class="t" style="left:262.5px;top:203px;letter-spacing:-0.280px">Orlando (FL)</div>
<div class="t" style="left:337.5px;top:203px;letter-spacing:-0.064px">Avanti Resort</div>
<div class="t" style="left:457.5px;top:203px;letter-spacing:-0.011px">3star</div>
<div class="t" style="left:497.5px;top:203px;letter-spacing:-0.380px">Room Only</div>
<div class="t" style="left:572.5px;top:203px;letter-spacing:-0.113px">Roh 7 Night Mi...</div>
<div class="t" style="left:662.5px;top:203px;letter-spacing:-0.276px">Fri</div>
<div class="t" style="left:697.5px;top:203px;letter-spacing:0.094px">26/05/2017</div>
<div class="t" style="left:765.5px;top:203px;letter-spacing:-0.276px">Fri</div>
<div class="t" style="left:800.5px;top:203px;letter-spacing:0.094px">09/06/2017</div>
<div class="t" style="left:868.5px;top:203px;letter-spacing:-0.187px">Bonotel</div>
<div class="t" style="right:544.5px;top:203px">692.66</div>
<div class="t" style="right:489.5px;top:203px">346.33</div>
<div class="t" style="right:424.5px;top:203px">692.66</div>
<div class="t" style="right:369.5px;top:203px">0.00</div>
<div class="t" style="left:1260.5px;top:203px;letter-spacing:-1.373px">XML</div>
<div class="t" style="left:262.5px;top:218px;letter-spacing:-0.280px">Orlando (FL)</div>
<div class="t" style="left:337.5px;top:218px;letter-spacing:-0.064px">Avanti Resort</div>
<div class="t" style="left:457.5px;top:218px;letter-spacing:-0.011px">3star</div>
<div class="t" style="left:497.5px;top:218px;letter-spacing:-0.380px">Room Only</div>
<div class="t" style="left:572.5px;top:218px;letter-spacing:-0.113px">Roh 7 Night Mi...</div>
<div class="t" style="left:662.5px;top:218px;letter-spacing:-0.276px">Fri</div>
<div class="t" style="left:697.5px;top:218px;letter-spacing:0.094px">26/05/2017</div>
<div class="t" style="left:765.5px;top:218px;letter-spacing:-0.276px">Fri</div>
<div class="t" style="left:800.5px;top:218px;letter-spacing:0.094px">09/06/2017</div>
<div class="t" style="left:868.5px;top:218px;letter-spacing:-0.187px">Bonotel</div>
<div class="t" style="right:544.5px;top:218px">692.66</div>
<div class="t" style="right:489.5px;top:218px">346.33</div>
<div class="t" style="right:424.5px;top:218px">692.66</div>
<div class="t" style="right:369.5px;top:218px">0.00</div>
<div class="t" style="left:1260.5px;top:218px;letter-spacing:-1.373px">XML</div>
<div class="t" style="left:262.5px;top:233px;letter-spacing:0.203px">Internation...</div>
<div class="t" style="left:337.5px;top:233px;letter-spacing:-0.064px">Avanti Resort</div>
<div class="t" style="left:457.5px;top:233px;letter-spacing:0.236px">3.0</div>
<div class="t" style="left:497.5px;top:233px;letter-spacing:-0.380px">Room Only</div>
<div class="t" style="left:572.5px;top:233px;letter-spacing:0.017px">Standard 2 Qu...</div>
<div class="t" style="left:662.5px;top:233px;letter-spacing:-0.276px">Fri</div>
<div class="t" style="left:697.5px;top:233px;letter-spacing:0.094px">26/05/2017</div>
<div class="t" style="left:765.5px;top:233px;letter-spacing:-0.276px">Fri</div>
<div class="t" style="left:800.5px;top:233px;letter-spacing:0.094px">09/06/2017</div>
<div class="t" style="left:868.5px;top:233px;letter-spacing:-0.097px">Ocean B...</div>
<div class="t" style="left:938px;top:232px;font-size:13px">*</div>
<div class="t" style="right:544.5px;top:233px">716.80</div>
<div class="t" style="right:489.5px;top:233px">358.40</div>
<div class="t" style="right:424.5px;top:233px">716.80</div>
<div class="t" style="right:369.5px;top:233px">0.00</div>
<div class="t" style="left:1260.5px;top:233px;letter-spacing:-1.373px">XML</div>
<div class="t" style="left:262.5px;top:248px;letter-spacing:0.203px">Internation...</div>
<div class="t" style="left:337.5px;top:248px;letter-spacing:-0.064px">Avanti Resort</div>
<div class="t" style="left:457.5px;top:248px;letter-spacing:0.236px">3.0</div>
<div class="t" style="left:497.5px;top:248px;letter-spacing:-0.380px">Room Only</div>
<div class="t" style="left:572.5px;top:248px;letter-spacing:-0.056px">Standard King ...</div>
<div class="t" style="left:662.5px;top:248px;letter-spacing:-0.276px">Fri</div>
<div class="t" style="left:697.5px;top:248px;letter-spacing:0.094px">26/05/2017</div>
<div class="t" style="left:765.5px;top:248px;letter-spacing:-0.276px">Fri</div>
<div class="t" style="left:800.5px;top:248px;letter-spacing:0.094px">09/06/2017</div>
<div class="t" style="left:868.5px;top:248px;letter-spacing:-0.097px">Ocean B...</div>
<div class="t" style="left:938px;top:247px;font-size:13px">*</div>
<div class="t" style="right:544.5px;top:248px">716.80</div>
<div class="t" style="right:489.5px;top:248px">358.40</div>
<div class="t" style="right:424.5px;top:248px">716.80</div>
<div class="t" style="right:369.5px;top:248px">0.00</div>
<div class="t" style="left:1260.5px;top:248px;letter-spacing:-1.373px">XML</div>
<div class="t" style="left:262.5px;top:263px;letter-spacing:0.136px">Orlando Int...</div>
<div class="t" style="left:337.5px;top:263px;letter-spacing:-0.073px">The Avanti Resort</div>
<div class="t" style="left:457.5px;top:263px;letter-spacing:0.236px">3.0</div>
<div class="t" style="left:497.5px;top:263px;letter-spacing:-0.380px">Room Only</div>
<div class="t" style="left:572.5px;top:263px;letter-spacing:-0.202px">Suite King Size ...</div>
<div class="t" style="left:662.5px;top:263px;letter-spacing:-0.276px">Fri</div>
<div class="t" style="left:697.5px;top:263px;letter-spacing:0.094px">26/05/2017</div>
<div class="t" style="left:765.5px;top:263px;letter-spacing:-0.276px">Fri</div>
<div class="t" style="left:800.5px;top:263px;letter-spacing:0.094px">09/06/2017</div>
<div class="t" style="left:868.5px;top:263px;letter-spacing:-0.227px">Get A Bed</div>
<div class="t" style="left:938px;top:262px;font-size:13px">*</div>
<div class="t" style="right:544.5px;top:263px">947.94</div>
<div class="t" style="right:489.5px;top:263px">473.97</div>
<div class="t" style="right:424.5px;top:263px">947.94</div>
<div class="t" style="right:369.5px;top:263px">0.00</div>
<div class="t" style="left:1260.5px;top:263px;letter-spacing:-1.373px">XML</div>
<div class="t" style="left:262.5px;top:278px;letter-spacing:0.136px">Orlando Int...</div>
<div class="t" style="left:337.5px;top:278px;letter-spacing:-0.073px">The Avanti Resort</div>
<div class="t" style="left:457.5px;top:278px;letter-spacing:0.236px">3.0</div>
<div class="t" style="left:497.5px;top:278px;letter-spacing:0.084px">Continental...</div>
<div class="t" style="left:572.5px;top:278px;letter-spacing:0.022px">Twin Two Que...</div>
<div class="t" style="left:662.5px;top:278px;letter-spacing:-0.276px">Fri</div>
<div class="t" style="left:697.5px;top:278px;letter-spacing:0.094px">26/05/2017</div>
<div class="t" style="left:765.5px;top:278px;letter-spacing:-0.276px">Fri</div>
<div class="t" style="left:800.5px;top:278px;letter-spacing:0.094px">09/06/2017</div>
<div class="t" style="left:868.5px;top:278px;letter-spacing:-0.227px">Get A Bed</div>
<div class="t" style="left:938px;top:277px;font-size:13px">*</div>
<div class="t" style="right:544.5px;top:278px">952.08</div>
<div class="t" style="right:489.5px;top:278px">476.04</div>
<div class="t" style="right:424.5px;top:278px">952.08</div>
<div class="t" style="right:369.5px;top:278px">0.00</div>
<div class="t" style="left:1260.5px;top:278px;letter-spacing:-1.373px">XML</div>
<div class="t" style="left:262.5px;top:293px;letter-spacing:0.136px">Orlando Int...</div>
<div class="t" style="left:337.5px;top:293px;letter-spacing:-0.073px">The Avanti Resort</div>
<div class="t" style="left:457.5px;top:293px;letter-spacing:0.236px">3.0</div>
<div class="t" style="left:497.5px;top:293px;letter-spacing:0.084px">Continental...</div>
<div class="t" style="left:572.5px;top:293px;letter-spacing:-0.247px">Double King Siz...</div>
<div class="t" style="left:662.5px;top:293px;letter-spacing:-0.276px">Fri</div>
<div class="t" style="left:697.5px;top:293px;letter-spacing:0.094px">26/05/2017</div>
<div class="t" style="left:765.5px;top:293px;letter-spacing:-0.276px">Fri</div>
<div class="t" style="left:800.5px;top:293px;letter-spacing:0.094px">09/06/2017</div>
<div class="t" style="left:868.5px;top:293px;letter-spacing:-0.227px">Get A Bed</div>
<div class="t" style="left:938px;top:292px;font-size:13px">*</div>
<div class="t" style="right:544.5px;top:293px">952.08</div>
<div class="t" style="right:489.5px;top:293px">476.04</div>
<div class="t" style="right:424.5px;top:293px">952.08</div>
<div class="t" style="right:369.5px;top:293px">0.00</div>
<div class="t" style="left:1260.5px;top:293px;letter-spacing:-1.373px">XML</div>
<div class="t" style="left:262.5px;top:308px;letter-spacing:0.136px">Orlando Int...</div>
<div class="t" style="left:337.5px;top:308px;letter-spacing:-0.073px">The Avanti Resort</div>
<div class="t" style="left:457.5px;top:308px;letter-spacing:0.236px">3.0</div>
<div class="t" style="left:497.5px;top:308px;letter-spacing:-0.080px">Hot Breakfast</div>
<div class="t" style="left:572.5px;top:308px;letter-spacing:0.022px">Twin Two Que...</div>
<div class="t" style="left:662.5px;top:308px;letter-spacing:-0.276px">Fri</div>
<div class="t" style="left:697.5px;top:308px;letter-spacing:0.094px">26/05/2017</div>
<div class="t" style="left:765.5px;top:308px;letter-spacing:-0.276px">Fri</div>
<div class="t" style="left:800.5px;top:308px;letter-spacing:0.094px">09/06/2017</div>
<div class="t" style="left:868.5px;top:308px;letter-spacing:-0.227px">Get A Bed</div>
<div class="t" style="left:938px;top:307px;font-size:13px">*</div>
<div class="t" style="right:544.5px;top:308px;letter-spacing:0.249px">1,117.37</div>
<div class="t" style="right:489.5px;top:308px">558.69</div>
<div class="t" style="right:424.5px;top:308px;letter-spacing:0.249px">1,117.37</div>
<div class="t" style="right:369.5px;top:308px">0.00</div>
<div class="t" style="left:1260.5px;top:308px;letter-spacing:-1.373px">XML</div>
<div class="t" style="left:262.5px;top:323px;letter-spacing:0.136px">Orlando Int...</div>
<div class="t" style="left:337.5px;top:323px;letter-spacing:-0.073px">The Avanti Resort</div>
<div class="t" style="left:457.5px;top:323px;letter-spacing:0.236px">3.0</div>
<div class="t" style="left:497.5px;top:323px;letter-spacing:-0.080px">Hot Breakfast</div>
<div class="t" style="left:572.5px;top:323px;letter-spacing:-0.247px">Double King Siz...</div>
<div class="t" style="left:662.5px;top:323px;letter-spacing:-0.276px">Fri</div>
<div class="t" style="left:697.5px;top:323px;letter-spacing:0.094px">26/05/2017</div>
<div class="t" style="left:765.5px;top:323px;letter-spacing:-0.276px">Fri</div>
<div class="t" style="left:800.5px;top:323px;letter-spacing:0.094px">09/06/2017</div>
<div class="t" style="left:868.5px;top:323px;letter-spacing:-0.227px">Get A Bed</div>
<div class="t" style="left:938px;top:322px;font-size:13px">*</div>
<div class="t" style="right:544.5px;top:323px;letter-spacing:0.249px">1,117.37</div>
<div class="t" style="right:489.5px;top:323px">558.69</div>
<div class="t" style="right:424.5px;top:323px;letter-spacing:0.249px">1,117.37</div>
<div class="t" style="right:369.5px;top:323px">0.00</div>
<div class="t" style="left:1260.5px;top:323px;letter-spacing:-1.373px">XML</div>
<div class="t" style="left:262.5px;top:338px;letter-spacing:0.136px">Orlando Int...</div>
<div class="t" style="left:337.5px;top:338px;letter-spacing:-0.073px">The Avanti Resort</div>
<div class="t" style="left:457.5px;top:338px;letter-spacing:0.236px">3.0</div>
<div class="t" style="left:497.5px;top:338px;letter-spacing:0.084px">Continental...</div>
<div class="t" style="left:572.5px;top:338px;letter-spacing:-0.202px">Suite King Size ...</div>
<div class="t" style="left:662.5px;top:338px;letter-spacing:-0.276px">Fri</div>
<div class="t" style="left:697.5px;top:338px;letter-spacing:0.094px">26/05/2017</div>
<div class="t" style="left:765.5px;top:338px;letter-spacing:-0.276px">Fri</div>
<div class="t" style="left:800.5px;top:338px;letter-spacing:0.094px">09/06/2017</div>
<div class="t" style="left:868.5px;top:338px;letter-spacing:-0.227px">Get A Bed</div>
<div class="t" style="left:938px;top:337px;font-size:13px">*</div>
<div class="t" style="right:544.5px;top:338px;letter-spacing:0.147px">1,246.31</div>
<div class="t" style="right:489.5px;top:338px">623.16</div>
<div class="t" style="right:424.5px;top:338px;letter-spacing:0.147px">1,246.31</div>
<div class="t" style="right:369.5px;top:338px">0.00</div>
<div class="t" style="left:1260.5px;top:338px;letter-spacing:-1.373px">XML</div>
<div class="t" style="left:262.5px;top:353px;letter-spacing:0.136px">Orlando Int...</div>
<div class="t" style="left:337.5px;top:353px;letter-spacing:-0.073px">The Avanti Resort</div>
<div class="t" style="left:457.5px;top:353px;letter-spacing:0.236px">3.0</div>
<div class="t" style="left:497.5px;top:353px;letter-spacing:-0.080px">Hot Breakfast</div>
<div class="t" style="left:572.5px;top:353px;letter-spacing:-0.202px">Suite King Size ...</div>
<div class="t" style="left:662.5px;top:353px;letter-spacing:-0.276px">Fri</div>
<div class="t" style="left:697.5px;top:353px;letter-spacing:0.094px">26/05/2017</div>
<div class="t" style="left:765.5px;top:353px;letter-spacing:-0.276px">Fri</div>
<div class="t" style="left:800.5px;top:353px;letter-spacing:0.094px">09/06/2017</div>
<div class="t" style="left:868.5px;top:353px;letter-spacing:-0.227px">Get A Bed</div>
<div class="t" style="left:938px;top:352px;font-size:13px">*</div>
<div class="t" style="right:544.5px;top:353px;letter-spacing:0.249px">1,411.60</div>
<div class="t" style="right:489.5px;top:353px">705.80</div>
<div class="t" style="right:424.5px;top:353px;letter-spacing:0.249px">1,411.60</div>
<div class="t" style="right:369.5px;top:353px">0.00</div>
<div class="t" style="left:1260.5px;top:353px;letter-spacing:-1.373px">XML</div>
<div class="t" style="left:263px;top:783px;letter-spacing:0.016px">First portion: 6.4 sec, total search time: 35.1 sec</div>
<div class="b" style="left:1560px;top:778px;width:23px;height:21px;background:#D4D0C8;border:1px solid;border-color:#fff #404040 #404040 #fff;box-shadow:inset -1px -1px 0 #808080"></div>
<div class="t c" style="left:1568px;top:779px;font-family:'Liberation Serif',serif;font-weight:bold;font-size:18px;color:#0A4CA8;line-height:18px;height:18px">i</div>
<div class="b" style="left:256px;top:805px;width:1337px;height:1px;background:#808080"></div>
<div class="t" style="left:259px;top:808px;letter-spacing:-0.438px">Summary</div>
<div class="b" style="left:308px;top:806px;width:1px;height:17px;background:#808080"></div>
<div class="t" style="left:311px;top:808px;letter-spacing:-0.309px">Search</div>
<div class="b" style="left:350px;top:805px;width:66px;height:18px;background:#108810;border-radius:0 0 3px 3px"></div>
<div class="t" style="left:353px;top:808px;color:#fff;letter-spacing:-0.396px">Acc 2A MCO</div>
<div class="t" style="left:420px;top:808px;letter-spacing:-0.420px">Financial Summary</div>
<div class="b" style="left:511px;top:806px;width:1px;height:17px;background:#808080"></div>
<div class="t" style="left:783px;top:832px;letter-spacing:-0.184px">User: 396 - Daniel Russell</div>
<div class="t" style="left:916px;top:832px;letter-spacing:-0.117px">Retailer: &#x27;Ocean-Florida&#x27;</div>
<div class="t" style="left:1042px;top:832px;letter-spacing:-0.059px">Client: none</div>
<div class="t" style="right:9px;top:832px;letter-spacing:-1.146px">GMT</div>
<div class="t" style="left:1540px;top:832px;letter-spacing:0.094px">19:56</div>
<div class="b" style="left:0px;top:857px;width:1600px;height:1px;background:#fff"></div>
<div class="b" style="left:2px;top:860px;width:52px;height:38px;background:#D4D0C8;border:1px solid;border-color:#fff #404040 #404040 #fff;box-shadow:inset -1px -1px 0 #808080"></div>
<svg style="left:4px;top:870px" width="17" height="16" viewBox="0 0 16.500 15.500"><defs><linearGradient id="wf1" x1="0" y1="0" x2="1" y2="1"><stop offset="0" stop-color="#E8341A"/><stop offset="1" stop-color="#F8A020"/></linearGradient><linearGradient id="wf2" x1="0" y1="1" x2="1" y2="0"><stop offset="0" stop-color="#A4DC48"/><stop offset="1" stop-color="#3C9C1C"/></linearGradient><linearGradient id="wf3" x1="0" y1="1" x2="1" y2="0"><stop offset="0" stop-color="#1C6CD0"/><stop offset="1" stop-color="#A8D8F8"/></linearGradient><linearGradient id="wf4" x1="0" y1="0" x2="1" y2="1"><stop offset="0" stop-color="#FFE040"/><stop offset="1" stop-color="#F89818"/></linearGradient></defs><path d="M2.500 1.800 C4.500 0.300 6.500 0.800 8.300 1.800 L7 7 C5.300 6 3.300 5.800 1 7.200Z" fill="url(#wf1)"/><path d="M9 2.300 C11 3.300 13.500 3.300 16 1.800 L14.500 7.500 C12.500 8.800 10 8.800 7.800 7.600Z" fill="url(#wf2)"/><path d="M0.800 8 C3 6.800 5 7 6.800 8 L5.500 13.200 C4 12.200 1.800 12 -0.500 13.400Z" fill="url(#wf3)"/><path d="M7.600 8.600 C9.800 9.800 12 9.700 14.300 8.400 L13 13.800 C11 15 8.500 15 6.300 13.800Z" fill="url(#wf4)"/></svg>
<div class="t bd" style="left:21px;top:873px;font-weight:bold;letter-spacing:0.588px">Start</div>
<div class="b" style="left:63px;top:860px;width:160px;height:38px;background:#fff;border:1px solid;border-color:#404040 #fff #fff #404040;box-shadow:inset 1px 1px 0 #484848,inset -1px -1px 0 #D4D0C8"></div>
<svg style="left:69px;top:869px" width="28" height="20" viewBox="0 0 28 20"><defs><radialGradient id="gg69_869" cx="0.32" cy="0.22" r="0.85"><stop offset="0" stop-color="#FFF27A"/><stop offset="0.18" stop-color="#FFC824"/><stop offset="0.42" stop-color="#F0960F"/><stop offset="0.66" stop-color="#CE5A16"/><stop offset="0.9" stop-color="#B43C0A"/></radialGradient></defs><path d="M0 7.500 C0 4 3 0.500 6 0 L12 0 L19.500 2 L28 5 L28 8.500 L17.500 19.800 L12.300 19.800 L3 12.500 L0.500 10.500 Z" fill="url(#gg69_869)"/></svg>
<div class="t bd" style="left:103px;top:873px;font-weight:bold;letter-spacing:0.481px">Interactive - Ocea...</div>
<div class="b" style="left:223px;top:860px;width:160px;height:38px;background:#D4D0C8;border:1px solid;border-color:#fff #404040 #404040 #fff;box-shadow:inset -1px -1px 0 #808080"></div>
<div class="b" style="left:227px;top:863px;width:33px;height:32px;background:#fff"></div>
<svg style="left:230px;top:869px" width="28" height="20" viewBox="0 0 28 20"><defs><radialGradient id="gg230_869" cx="0.32" cy="0.22" r="0.85"><stop offset="0" stop-color="#FFF27A"/><stop offset="0.18" stop-color="#FFC824"/><stop offset="0.42" stop-color="#F0960F"/><stop offset="0.66" stop-color="#CE5A16"/><stop offset="0.9" stop-color="#B43C0A"/></radialGradient></defs><path d="M0 7.500 C0 4 3 0.500 6 0 L12 0 L19.500 2 L28 5 L28 8.500 L17.500 19.800 L12.300 19.800 L3 12.500 L0.500 10.500 Z" fill="url(#gg230_869)"/></svg>
<div class="t" style="left:262px;top:873px;letter-spacing:0.243px">Interactive [2] - Oce...</div>
<div class="b" style="left:1408px;top:860px;width:190px;height:38px;border:1px solid;border-color:#808080 #fff #fff #808080"></div>
<svg style="left:1415px;top:871px" width="16" height="16" viewBox="0 0 16 16"><path d="M0.500 1 L8 2.500 L8 8.500 L0.500 8Z" fill="#F08A20"/><path d="M1.500 1.200 L5 0 L8 2.500 L8 6 L1 5Z" fill="#F8C030"/><path d="M8 2.500 L15.500 0.500 L15.500 7.500 L8 8.500Z" fill="#1E86D4"/><path d="M0.500 8 L8 8.500 L8 15.500 L0.500 14.500Z" fill="#3C9E44"/><path d="M8 8.500 L15.500 7.500 L15.500 15 L8 15.500Z" fill="#E43820"/><path d="M8 8.500 L15.500 7.500 L15.500 11 L8 12Z" fill="#F07020"/></svg>
<svg style="left:1438px;top:872px" width="18" height="12" viewBox="0 0 18 12"><rect x="0.500" y="2.500" width="13" height="6" fill="#28B828" stroke="#186818" stroke-width="1"/><path d="M2 8.500 v2 M4 8.500 v2 M6 8.500 v2 M8 8.500 v2 M10 8.500 v2" stroke="#C8A828" stroke-width="1"/><path d="M15 1 v8 M15 2 h2 M15 5 h2" stroke="#404040" stroke-width="1.200" fill="none"/></svg>
<svg style="left:1462px;top:870px" width="18" height="18" viewBox="0 0 18 18"><rect x="1.500" y="1.500" width="5" height="7" fill="#E8E8E8" stroke="#606060" stroke-width="1"/><path d="M4 8.500 V15 H8" stroke="#606060" stroke-width="1" fill="none"/><rect x="7.500" y="5.500" width="8" height="8" fill="#F4F4F4" stroke="#707070" stroke-width="1"/><rect x="9" y="7" width="5" height="4" fill="#B8C8D8"/><path d="M8 15.500 h7" stroke="#707070" stroke-width="1.400"/></svg>
<svg style="left:1486px;top:870px" width="18" height="18" viewBox="0 0 18 18"><path d="M1.500 6.500 H4.500 L8 3 V15 L4.500 11.500 H1.500Z" fill="#F0F0F0" stroke="#707070" stroke-width="1"/><path d="M9.500 4.500 C11 6 11 7.500 10.500 8.500" stroke="#909090" stroke-width="1" fill="none"/><circle cx="12" cy="12" r="4.200" fill="#E82020"/><path d="M10 10 L14 14 M14 10 L10 14" stroke="#fff" stroke-width="1.500"/></svg>
<div class="t" style="left:1531px;top:865px;letter-spacing:0.094px">19:56</div>
<div class="t" style="left:1517px;top:881px;letter-spacing:0.094px">14/07/2016</div>
<svg style="left:1580px;top:873px" width="16" height="13" viewBox="0 0 16 13"><rect x="0.500" y="0.500" width="14.500" height="11" fill="#2C6CD0" stroke="#8CB0E8" stroke-width="1"/><path d="M1 1 H15 V6 L1 9Z" fill="#3C80E0"/><rect x="1" y="9" width="14" height="2.500" fill="#202830"/><circle cx="3" cy="10" r="1.300" fill="#E8C020"/><circle cx="2.600" cy="9.700" r="0.700" fill="#D03020"/></svg>
</body></html>
